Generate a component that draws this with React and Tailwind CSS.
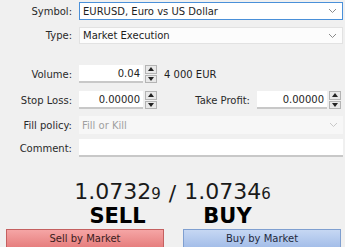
import React from "react";

const Chevron = ({ light }) => (
  <svg width="9" height="6" viewBox="0 0 9 6" className="shrink-0">
    <path d="M1 1 L4.5 4.5 L8 1" fill="none" stroke={light ? "#c8c8c8" : "#8a8a8a"} strokeWidth="1" />
  </svg>
);

const Spinner = () => (
  <div className="ml-[2px] flex h-[18px] w-[12px] flex-col gap-[1px]">
    <div className="flex h-[8.5px] items-center justify-center border border-[#b4b4b4] bg-[#e8e8e8]">
      <svg width="6" height="4" viewBox="0 0 6 4"><path d="M0 4 L3 0 L6 4 Z" fill="#222" /></svg>
    </div>
    <div className="flex h-[8.5px] items-center justify-center border border-[#b4b4b4] bg-[#e8e8e8]">
      <svg width="6" height="4" viewBox="0 0 6 4"><path d="M0 0 L3 4 L6 0 Z" fill="#222" /></svg>
    </div>
  </div>
);

const Label = ({ children }) => (
  <div className="w-[72px] shrink-0 text-right text-[#2a2a2a]">{children}</div>
);

const NumInput = ({ value, w }) => (
  <div className={`flex h-[18px] items-center justify-end border-b-2 border-[#c8c8c8] bg-white pr-[3px] ${w}`}>
    {value}
  </div>
);

export default function App() {
  return (
    <div className="flex h-[247px] w-[345px] flex-col overflow-hidden bg-[#f0f0f0] font-['DejaVu_Sans',sans-serif] text-[10px] text-[#1e1e1e]">
      <div className="mt-[2px] flex h-[18px] shrink-0 items-center">
        <Label>Symbol:</Label>
        <div className="ml-[7px] mr-[2px] flex h-[18px] flex-1 items-center justify-between border border-[#4a90d9] bg-white pl-[3px] pr-[5px]">
          <span>EURUSD, Euro vs US Dollar</span>
          <Chevron />
        </div>
      </div>

      <div className="mt-[7px] flex h-[17px] shrink-0 items-center">
        <Label>Type:</Label>
        <div className="ml-[7px] mr-[2px] flex h-[17px] flex-1 items-center justify-between border border-[#e2e2e2] bg-[#fcfcfc] pl-[3px] pr-[5px]">
          <span>Market Execution</span>
          <Chevron />
        </div>
      </div>

      <div className="mt-[21px] flex h-[18px] shrink-0 items-center">
        <Label>Volume:</Label>
        <div className="ml-[7px]">
          <NumInput value="0.04" w="w-[64px]" />
        </div>
        <Spinner />
        <span className="ml-[7px]">4 000 EUR</span>
      </div>

      <div className="mt-[8px] flex h-[18px] shrink-0 items-center">
        <Label>Stop Loss:</Label>
        <div className="ml-[7px]">
          <NumInput value="0.00000" w="w-[64px]" />
        </div>
        <Spinner />
        <div className="flex-1 pr-[7px] text-right text-[#2a2a2a]">Take Profit:</div>
        <NumInput value="0.00000" w="w-[70px]" />
        <Spinner />
        <div className="w-[4px]" />
      </div>

      <div className="mt-[7px] flex h-[18px] shrink-0 items-center">
        <Label>Fill policy:</Label>
        <div className="ml-[7px] mr-[2px] flex h-[18px] flex-1 items-center justify-between bg-[#f7f7f7] pl-[3px] pr-[5px] text-[#a0a0a0]">
          <span>Fill or Kill</span>
          <Chevron light />
        </div>
      </div>

      <div className="mt-[5px] flex h-[18px] shrink-0 items-center">
        <Label>Comment:</Label>
        <div className="ml-[7px] mr-[2px] h-[18px] flex-1 border-b-2 border-[#c8c8c8] bg-white" />
      </div>

      <div className="mt-[24px] flex shrink-0 justify-center">
        <div className="grid grid-cols-[auto_auto_auto] items-end text-[#1a1a1a]">
          <div className="text-[22px] leading-[22px]">
            1.0732<span className="text-[15px]">9</span>
          </div>
          <div className="px-[8px] text-[22px] leading-[22px]">/</div>
          <div className="text-[22px] leading-[22px]">
            1.0734<span className="text-[15px]">6</span>
          </div>
          <div className="mt-[1px] text-center text-[21px] font-bold leading-[20px] text-black">SELL</div>
          <div />
          <div className="mt-[1px] text-center text-[21px] font-bold leading-[20px] text-black">BUY</div>
        </div>
      </div>

      <div className="mt-[3px] flex shrink-0 gap-[19px] px-[6px] pr-[4px]">
        <button className="h-[20px] w-[158px] border border-[#c46060] bg-gradient-to-b from-[#f5a5a5] to-[#e57c7c] text-[10px] leading-[18px] text-[#3a2020]">
          Sell by Market
        </button>
        <button className="h-[20px] w-[158px] border border-[#7f9fd0] bg-gradient-to-b from-[#c6d7f3] to-[#a2bce8] text-[10px] leading-[18px] text-[#1f2a40]">
          Buy by Market
        </button>
      </div>
    </div>
  );
}
